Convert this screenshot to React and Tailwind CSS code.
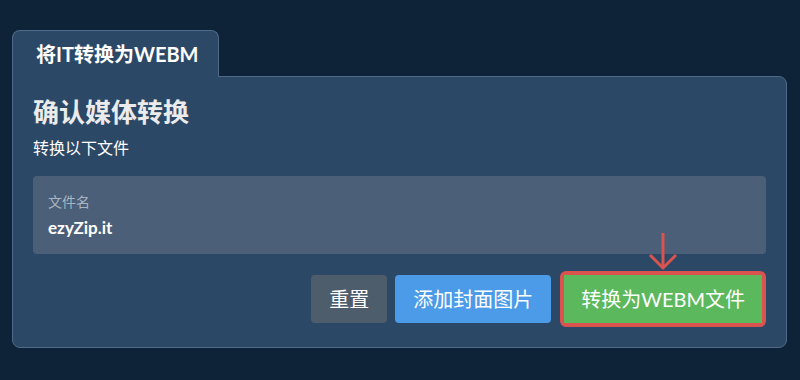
export default function App() {
  const font = { fontFamily: 'Lato, "Noto Sans CJK SC", sans-serif' }

  return (
    <div className="min-h-[380px] w-full bg-[#0f2338] pt-[30px] pl-[12px] pr-[13px]" style={font}>
      <div className="flex">
        <div className="relative z-10 -mb-px flex h-[47px] w-[207px] items-center rounded-t-lg border border-b-0 border-[#4f6986] bg-[#2c4867] pl-[23px] text-[20px] font-bold text-white">
          将IT转换为WEBM
        </div>
      </div>

      <div className="rounded-tr-lg rounded-b-lg border border-[#4f6986] bg-[#2c4867] px-5 pt-5 pb-5">
        <h2 className="text-[26px] font-bold leading-[31px] text-[#ebebeb]">确认媒体转换</h2>
        <p className="mt-[8px] text-[16px] leading-6 text-white">转换以下文件</p>

        <div className="mt-4 rounded bg-[#4b5f78] px-[15px] pt-4 pb-[14px]">
          <div className="text-[14px] leading-5 text-[#a9b4c1]">文件名</div>
          <div className="mt-1 text-[17px] font-bold leading-6 text-white">ezyZip.it</div>
        </div>

        <div className="mt-[17px] flex items-center justify-end gap-2">
          <button className="h-[48px] rounded bg-[#4e5d6c] px-[18px] text-[20px] text-white">重置</button>
          <button className="h-[48px] rounded bg-[#4c9be8] px-[18px] text-[20px] text-white">添加封面图片</button>
          <div className="relative ml-px rounded-md border-4 border-[#d9534f]">
            <svg
              className="absolute left-1/2 -translate-x-1/2 top-[-42px]"
              width="30"
              height="38"
              viewBox="0 0 30 38"
              fill="none"
              stroke="#d9534f"
              strokeWidth="3"
            >
              <path d="M15 0 V35" />
              <path d="M2 22 L15 35 L28 22" />
            </svg>
            <button className="block h-[48px] bg-[#5cb85c] px-[17px] text-[20px] text-white">转换为WEBM文件</button>
          </div>
        </div>
      </div>
    </div>
  )
}
